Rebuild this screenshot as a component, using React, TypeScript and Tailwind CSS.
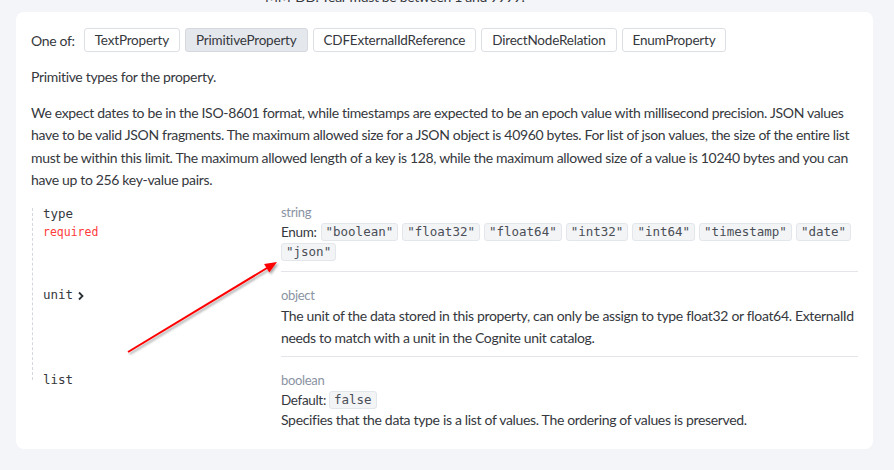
import React from "react";

const sans = { fontFamily: "Lato, 'Noto Sans', sans-serif" };
const mono = { fontFamily: "'DejaVu Sans Mono', 'Liberation Mono', monospace" };

const options = ["TextProperty", "PrimitiveProperty", "CDFExternalIdReference", "DirectNodeRelation", "EnumProperty"];
const enums = ['"boolean"', '"float32"', '"float64"', '"int32"', '"int64"', '"timestamp"', '"date"', '"json"'];

function Tag({ children }: { children: React.ReactNode }) {
  return (
    <span
      className="inline-flex items-center h-[18px] px-[4px] rounded-[3px] border border-[#e3e6ea] bg-[#f3f4f6] text-[12.5px] tracking-normal text-[#4a4f57]"
      style={mono}
    >
      {children}
    </span>
  );
}

export default function App() {
  return (
    <div
      className="relative min-h-screen w-[894px] h-[470px] overflow-hidden bg-[#f4f5f8] text-[#35383d] tracking-[-0.33px]"
      style={sans}
    >
      <div className="h-[12px] relative overflow-hidden">
        <div className="absolute left-[265px] top-[-13px] text-[14px] leading-[20px] whitespace-nowrap">
          MM-DD. Year must be between 1 and 9999.
        </div>
      </div>

      <div className="ml-4 w-[857px] bg-white rounded-lg px-[15px] pt-[16px] pb-[19px]">
        <div className="flex items-center text-[13.5px]">
          <span className="mr-[9px] text-[14px]">One of:</span>
          <div className="flex gap-[5px]">
            {options.map((o) => (
              <span
                key={o}
                className={
                  "h-[24px] px-[10px] flex items-center rounded-[3px] border tracking-[-0.2px] " +
                  (o === "PrimitiveProperty"
                    ? "bg-[#e4e7ec] border-[#d5d9df]"
                    : "bg-white border-[#dcdfe4]")
                }
              >
                {o}
              </span>
            ))}
          </div>
        </div>

        <p className="mt-[14px] text-[14px] leading-[22px]">Primitive types for the property.</p>
        <p className="mt-[14px] text-[14px] leading-[22.3px]">
          We expect dates to be in the ISO-8601 format, while timestamps are expected to be an epoch value with millisecond
          precision. JSON values have to be valid JSON fragments. The maximum allowed size for a JSON object is 40960 bytes.
          For list of json values, the size of the entire list must be within this limit. The maximum allowed length of a key
          is 128, while the maximum allowed size of a value is 10240 bytes and you can have up to 256 key-value pairs.
        </p>

        <div className="relative mt-[11px]">
          <div className="absolute left-[1px] top-[6px] h-[172px] border-l border-dashed border-[#d4d7dc]" />

          <div className="flex">
            <div className="w-[250px] pl-[12px] pt-[3px] tracking-normal" style={mono}>
              <div className="text-[12.5px] leading-[18px]">type</div>
              <div className="text-[11.5px] leading-[18px] text-[#ff3b3b]">required</div>
            </div>
            <div className="flex-1 pt-0 pb-[10px] border-b border-[#e3e5e9]">
              <div className="text-[13px] leading-[20px] text-[#8a93a3]">string</div>
              <div className="flex flex-wrap items-center gap-x-[4px] gap-y-[2px] text-[13.5px] leading-[18px] pt-[1px]">
                <span>Enum:</span>
                {enums.map((e) => (
                  <Tag key={e}>{e}</Tag>
                ))}
              </div>
            </div>
          </div>

          <div className="flex">
            <div className="w-[250px] pl-[12px] pt-[13px] tracking-normal">
              <div className="flex items-center gap-[3px] text-[12.5px] leading-[20px]" style={mono}>
                unit
                <svg width="10" height="10" viewBox="0 0 10 10" className="mt-[1px]">
                  <path d="M3 1.5 L6.5 5 L3 8.5" fill="none" stroke="#2d3036" strokeWidth="1.8" />
                </svg>
              </div>
            </div>
            <div className="flex-1 pt-[13px] pb-[7px] border-b border-[#e3e5e9]">
              <div className="text-[13px] leading-[20px] text-[#8a93a3]">object</div>
              <p className="text-[14px] leading-[22px]">
                The unit of the data stored in this property, can only be assign to type float32 or float64. ExternalId needs
                to match with a unit in the Cognite unit catalog.
              </p>
            </div>
          </div>

          <div className="flex">
            <div className="w-[250px] pl-[12px] pt-[13px] tracking-normal">
              <div className="text-[12.5px] leading-[20px]" style={mono}>list</div>
            </div>
            <div className="flex-1 pt-[13px]">
              <div className="text-[13px] leading-[20px] text-[#8a93a3]">boolean</div>
              <div className="flex items-center gap-[3px] text-[13.5px] leading-[20px]">
                <span>Default:</span>
                <Tag>false</Tag>
              </div>
              <p className="text-[14px] leading-[20px]">
                Specifies that the data type is a list of values. The ordering of values is preserved.
              </p>
            </div>
          </div>
        </div>
      </div>

      <svg className="absolute left-0 top-0 pointer-events-none" width="894" height="470" viewBox="0 0 894 470">
        <defs>
          <filter id="sh" x="-20%" y="-20%" width="140%" height="140%">
            <feDropShadow dx="1.5" dy="2" stdDeviation="1.2" floodColor="#000" floodOpacity="0.35" />
          </filter>
        </defs>
        <g filter="url(#sh)">
          <line x1="128" y1="352" x2="267" y2="268" stroke="#ff0000" strokeWidth="2" />
          <polygon points="277,262 269.3,272.5 264.1,263.9" fill="#ff0000" />
        </g>
      </svg>
    </div>
  );
}
